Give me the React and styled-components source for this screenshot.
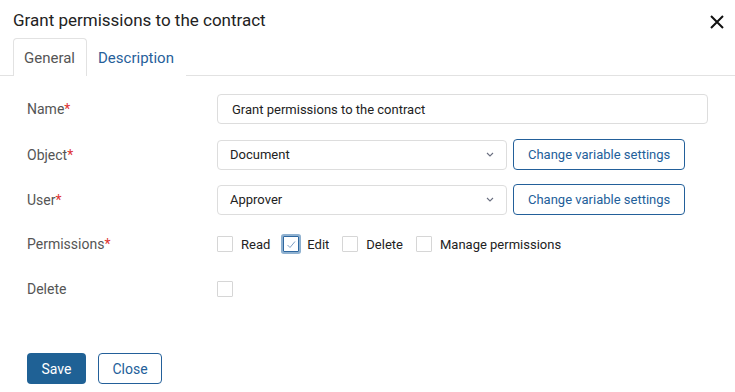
import React from "react";
import styled, { createGlobalStyle } from "styled-components";

const Global = createGlobalStyle`
  html, body { margin: 0; padding: 0; background: #fff; }
  body { font-family: Roboto, "Liberation Sans", Arial, sans-serif; }
  * { box-sizing: border-box; }
`;

const Dialog = styled.div`
  width: 735px;
  height: 392px;
  background: #fff;
  display: flex;
  flex-direction: column;
`;

const Header = styled.div`
  display: flex;
  justify-content: space-between;
  align-items: flex-start;
  padding: 9px 10px 0 13px;
  height: 38px;
`;

const Title = styled.h1`
  margin: 0;
  font-size: 17px;
  line-height: 22px;
  font-weight: 400;
  color: #222;
`;

const CloseX = styled.button`
  border: 0;
  background: none;
  padding: 0;
  margin-top: 5px;
  width: 16px;
  height: 16px;
  cursor: pointer;
  display: flex;
`;

const Tabs = styled.div`
  display: flex;
  padding-left: 13px;
  border-bottom: 1px solid #e2e2e2;
  height: 38px;
`;

const Tab = styled.div`
  padding: 0 11px 0 10px;
  display: flex;
  align-items: center;
  font-size: 15px;
  color: ${(p) => (p.$active ? "#555" : "#27609a")};
  background: #fff;
  border: 1px solid ${(p) => (p.$active ? "#e2e2e2" : "transparent")};
  border-bottom: 0;
  border-radius: 4px 4px 0 0;
  margin-bottom: -1px;
  height: 38px;
`;

const Form = styled.div`
  padding: 18px 27px 0 27px;
  display: flex;
  flex-direction: column;
  gap: 15px;
`;

const Row = styled.div`
  display: grid;
  grid-template-columns: 190px 1fr;
  align-items: center;
  height: 30px;
`;

const Label = styled.div`
  font-size: 14px;
  color: #555;
`;

const Req = styled.span`
  color: #d33;
`;

const Field = styled.div`
  display: flex;
  align-items: center;
  gap: 6px;
`;

const Input = styled.div`
  flex: 1;
  height: 30px;
  border: 1px solid #ddd;
  border-radius: 4px;
  padding: 0 14px;
  display: flex;
  align-items: center;
  font-size: 13px;
  color: #222;
`;

const Select = styled.div`
  width: 290px;
  height: 30px;
  border: 1px solid #ddd;
  border-radius: 4px;
  padding: 0 12px;
  display: flex;
  align-items: center;
  justify-content: space-between;
  font-size: 13px;
  color: #222;
`;

const OutlineButton = styled.button`
  height: 31px;
  padding: 0 14px;
  border: 1px solid #23609a;
  border-radius: 4px;
  background: #fff;
  color: #23609a;
  font-family: inherit;
  font-size: 13px;
  cursor: pointer;
`;

const Checks = styled.div`
  display: flex;
  align-items: center;
  gap: 13px;
`;

const CheckItem = styled.label`
  display: flex;
  align-items: center;
  gap: 8px;
  font-size: 13px;
  color: #222;
`;

const Box = styled.span`
  width: 16px;
  height: 16px;
  border: 1px solid ${(p) => (p.$checked ? "#2f68a0" : "#d6d6d6")};
  border-radius: 1px;
  background: #fff;
  display: inline-flex;
  align-items: center;
  justify-content: center;
  box-shadow: ${(p) => (p.$checked ? "0 0 0 2px #8fb1d0" : "none")};
`;

const Footer = styled.div`
  margin-top: auto;
  padding: 0 0 8px 27px;
  display: flex;
  gap: 12px;
`;

const PrimaryButton = styled.button`
  height: 31px;
  width: 59px;
  border: 0;
  border-radius: 4px;
  background: #1f6195;
  color: #fff;
  font-family: inherit;
  font-size: 14px;
  cursor: pointer;
`;

const SecondaryButton = styled(OutlineButton)`
  width: 64px;
  padding: 0;
  font-size: 14px;
`;

const Chevron = () => (
  <svg width="8" height="5" viewBox="0 0 8 5">
    <path d="M1 1 L4 4 L7 1" fill="none" stroke="#6a6f80" strokeWidth="1.1" />
  </svg>
);

const Check = ({ checked }) => (
  <Box $checked={checked}>
    {checked && (
      <svg width="12" height="12" viewBox="0 0 12 12">
        <path d="M2.5 7 L5 9.5 L10 3.5" fill="none" stroke="#7f9fc4" strokeWidth="1" />
      </svg>
    )}
  </Box>
);

export default function App() {
  return (
    <>
      <Global />
      <Dialog>
        <Header>
          <Title>Grant permissions to the contract</Title>
          <CloseX aria-label="Close">
            <svg width="16" height="16" viewBox="0 0 16 16">
              <path d="M2 2 L14 14 M14 2 L2 14" stroke="#111" strokeWidth="2" />
            </svg>
          </CloseX>
        </Header>
        <Tabs>
          <Tab $active>General</Tab>
          <Tab>Description</Tab>
        </Tabs>
        <Form>
          <Row>
            <Label>Name<Req>*</Req></Label>
            <Field>
              <Input>Grant permissions to the contract</Input>
            </Field>
          </Row>
          <Row>
            <Label>Object<Req>*</Req></Label>
            <Field>
              <Select>Document<Chevron /></Select>
              <OutlineButton>Change variable settings</OutlineButton>
            </Field>
          </Row>
          <Row>
            <Label>User<Req>*</Req></Label>
            <Field>
              <Select>Approver<Chevron /></Select>
              <OutlineButton>Change variable settings</OutlineButton>
            </Field>
          </Row>
          <Row>
            <Label>Permissions<Req>*</Req></Label>
            <Checks>
              <CheckItem><Check />Read</CheckItem>
              <CheckItem><Check checked />Edit</CheckItem>
              <CheckItem><Check />Delete</CheckItem>
              <CheckItem><Check />Manage permissions</CheckItem>
            </Checks>
          </Row>
          <Row>
            <Label>Delete</Label>
            <Checks>
              <Check />
            </Checks>
          </Row>
        </Form>
        <Footer>
          <PrimaryButton>Save</PrimaryButton>
          <SecondaryButton>Close</SecondaryButton>
        </Footer>
      </Dialog>
    </>
  );
}
